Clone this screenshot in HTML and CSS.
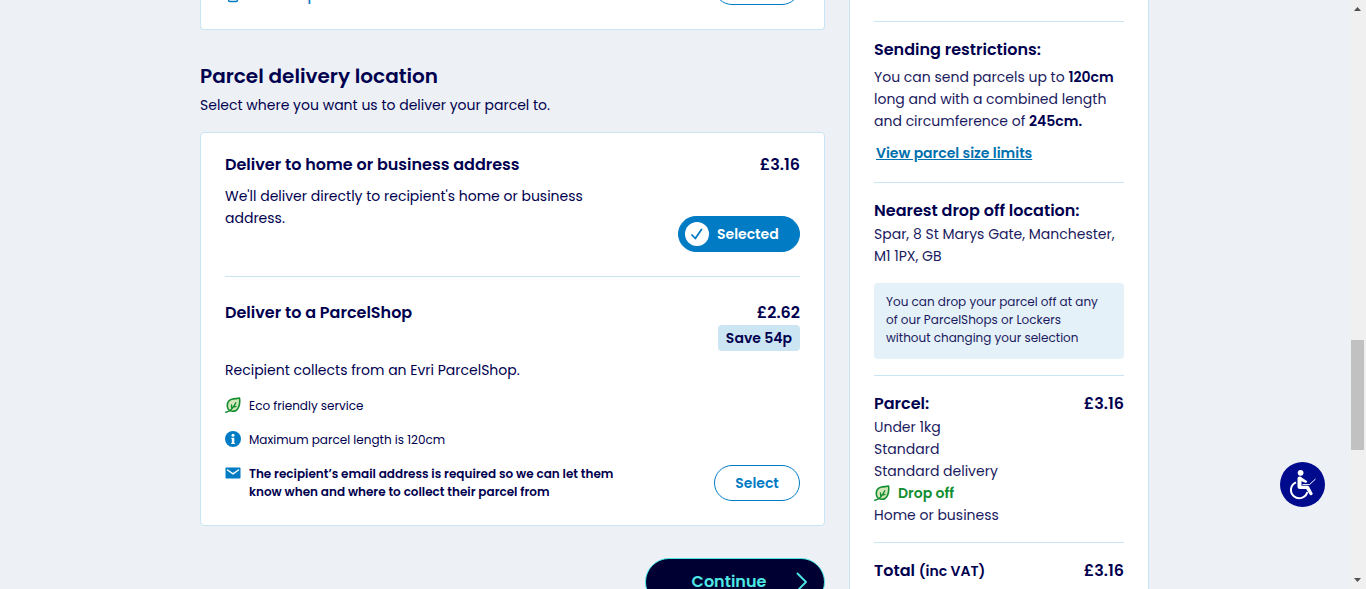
FILE: index.html
```html
<!DOCTYPE html>
<html lang="en">
<head>
<meta charset="utf-8">
<title>Parcel delivery location</title>
<link rel="stylesheet" href="styles.css">
</head>
<body>
<svg class="sprite" aria-hidden="true">
  <symbol id="leaf" viewBox="0 0 16 16">
    <path d="M14.500 1C13 1.600 10 1.500 7.500 2C4 2.800 2.200 5.500 2.300 8.800C2.400 12 4.500 14.200 7.500 14.300C12.800 14.500 15.600 8.500 14.500 1Z" fill="#d3e6b8" stroke="#118e2f" stroke-width="1.600" stroke-linejoin="round"/>
    <path d="M.7 15.300C4.500 15 8.600 10.500 10.800 5.800M6.500 8L6.800 11.200M7.600 10.400L11 9.400" fill="none" stroke="#118e2f" stroke-width="1.400" stroke-linecap="round"/>
  </symbol>
</svg>
<div class="window">
  <div class="viewport">
    <div class="layout">
      <main class="main">
        <section class="card previous">
          <svg class="previous-icon" width="12" height="12" viewBox="0 0 12 12" aria-hidden="true"><rect x="1.500" y="0" width="9" height="8.500" rx="1.500" fill="none" stroke="#007bc4" stroke-width="1.500"/></svg>
          <a class="previous-link" href="#">Find shop</a>
          <button class="btn" type="button" aria-label="Select previous option"></button>
        </section>

        <h1>Parcel delivery location</h1>
        <p class="intro">Select where you want us to deliver your parcel to.</p>

        <section class="card options">
          <article class="option">
            <div class="option-text">
              <h2>Deliver to home or business address</h2>
              <p class="home-text">We'll deliver directly to recipient's home or business<br>address.</p>
            </div>
            <div class="option-side">
              <strong class="price">£3.16</strong>
              <button class="btn selected" type="button" aria-pressed="true">
                <svg width="24" height="24" viewBox="0 0 24 24" aria-hidden="true"><circle cx="12" cy="12" r="12" fill="#fff"/><path d="M7 13L10.300 16.500L16.500 7.500" fill="none" stroke="#007bc4" stroke-width="1.800" stroke-linecap="round" stroke-linejoin="round"/></svg>
                Selected
              </button>
            </div>
          </article>
          <article class="option">
            <div class="option-text">
              <h2>Deliver to a ParcelShop</h2>
              <p class="shop-text">Recipient collects from an Evri ParcelShop.</p>
              <ul class="notes">
                <li><svg class="icon" aria-hidden="true"><use href="#leaf"/></svg><span>Eco friendly service</span></li>
                <li><svg class="icon" viewBox="0 0 16 16" aria-hidden="true"><circle cx="8" cy="8" r="8" fill="#007bc4"/><circle cx="8" cy="4.200" r="1.500" fill="#fff"/><path d="M6.200 6.700H9.300V12H10V13H6.200V12H6.800V7.700H6.200Z" fill="#fff"/></svg><span>Maximum parcel length is 120cm</span></li>
                <li class="strong"><svg class="icon" viewBox="0 0 16 16" aria-hidden="true"><rect x=".5" y="2.500" width="15" height="11" rx=".8" fill="#007bc4"/><path d="M2.500 5L8 8.800L13.500 5" fill="none" stroke="#fff" stroke-width="1.400" stroke-linecap="round" stroke-linejoin="round"/></svg><span>The recipient’s email address is required so we can let them<br>know when and where to collect their parcel from</span></li>
              </ul>
            </div>
            <div class="option-side">
              <div class="price-group"><strong class="price">£2.62</strong><span class="badge">Save 54p</span></div>
              <button class="btn" type="button">Select</button>
            </div>
          </article>
        </section>

        <button class="continue" type="button"><span>Continue</span><svg width="12" height="20" viewBox="0 0 12 20" aria-hidden="true"><path d="M1.500 1.500L10 10L1.500 18.500" fill="none" stroke="#4de8e4" stroke-width="1.800" stroke-linecap="round" stroke-linejoin="round"/></svg></button>
      </main>

      <aside class="summary">
        <section class="block">
          <h2>Sending restrictions:</h2>
          <p class="limits">You can send parcels up to <b>120cm</b><br>long and with a combined length<br>and circumference of <b>245cm.</b></p>
          <a class="limits-link" href="#">View parcel size limits</a>
        </section>
        <section class="block">
          <h2>Nearest drop off location:</h2>
          <p>Spar, 8 St Marys Gate, Manchester,<br>M1 1PX, GB</p>
          <p class="hint">You can drop your parcel off at any<br>of our ParcelShops or Lockers<br>without changing your selection</p>
        </section>
        <section class="block">
          <div class="line"><h2>Parcel:</h2><strong class="price">£3.16</strong></div>
          <ul class="details">
            <li>Under 1kg</li>
            <li>Standard</li>
            <li>Standard delivery</li>
            <li class="eco"><svg class="icon" aria-hidden="true"><use href="#leaf"/></svg>Drop off</li>
            <li>Home or business</li>
          </ul>
        </section>
        <section class="block">
          <div class="line"><h2>Total <small>(inc VAT)</small></h2><strong class="price">£3.16</strong></div>
        </section>
      </aside>
    </div>
    <button class="access" type="button" aria-label="Accessibility options">
      <svg width="45" height="45" viewBox="0 0 45 45" aria-hidden="true">
        <circle cx="22.500" cy="22.500" r="22.500" fill="#000a8c"/>
        <circle cx="20.600" cy="10.800" r="2.900" fill="#fff"/>
        <path d="M17.500 16.500Q17.500 14.500 19.500 14.500Q21 14.500 22 15.700L27.300 19.200Q26.800 21.200 25.200 20.700L21.500 19.300V23.700H27Q28.700 23.700 29.300 25L32.800 31.800Q31.500 34.200 29.800 32.800L26.200 27H20Q17.500 27 17.500 24.500Z" fill="#fff"/>
        <path d="M16 20.300A8.300 8.300 0 1 0 27.300 30" fill="none" stroke="#fff" stroke-width="2"/>
        <path d="M22.500 22.600H29.500L35.500 17" fill="none" stroke="#fff" stroke-width="1"/>
      </svg>
    </button>
  </div>
  <div class="scrollbar" aria-hidden="true">
    <svg width="15" height="17" viewBox="0 0 15 17"><path d="M3 11H10L6.500 7Z" fill="#505050"/></svg>
    <div class="track"><div class="thumb"></div></div>
    <svg width="15" height="17" viewBox="0 0 15 17"><path d="M3 6H10L6.500 10Z" fill="#505050"/></svg>
  </div>
</div>
</body>
</html>
```
FILE: styles.css
```css
* { box-sizing: border-box; }
body {
  margin: 0;
  background: #edf1f5;
  color: #00004f;
  font: 14px/22px Poppins, Inter, sans-serif;
}
h1, h2, p, ul { margin: 0; padding: 0; }
ul { list-style: none; }
button { font: inherit; cursor: pointer; }
a { color: #0070ae; }
b, strong { font-weight: 600; }
.sprite { position: absolute; width: 0; height: 0; }

.window { display: flex; height: 100vh; overflow: hidden; }
.viewport { flex: 1; min-width: 0; padding-right: 2px; }
.layout {
  display: grid;
  grid-template-columns: minmax(0, 1fr) 300px;
  gap: 24px;
  max-width: 949px;
  margin: 0 auto;
}
.main { display: flex; flex-direction: column; }

.card { background: #fff; border: 1px solid #c9e4f2; border-radius: 4px; }
.previous {
  display: flex;
  align-items: flex-end;
  gap: 8px;
  height: 30px;
  padding: 0 24px 24px;
  margin-bottom: 32px;
  border-top: 0;
  border-radius: 0 0 4px 4px;
  overflow: hidden;
}
.previous-icon { margin: 0 2px; }
.previous-link { color: #007bc4; font-weight: 500; line-height: 20px; text-decoration: none; }
.previous .btn { margin-left: auto; }
.previous > * { flex-shrink: 0; }

h1 { font-size: 20px; font-weight: 600; line-height: 28px; }
.intro { margin: 4px 0 16px; }
.options { padding: 20px 24px 24px; }
.option { display: flex; justify-content: space-between; }
.option + .option { margin-top: 24px; padding-top: 24px; border-top: 1px solid #c9e4f2; }
h2, .price { font-size: 16px; font-weight: 600; line-height: 24px; }
.home-text { margin-top: 8px; }
.shop-text { margin: 34px 0 16px; }
.notes { display: grid; gap: 16px; font-size: 12px; line-height: 18px; }
.notes li { display: flex; gap: 8px; }
.notes .strong { font-weight: 600; }
.icon { flex: none; width: 16px; height: 16px; }

.option-side, .price-group { display: flex; flex-direction: column; align-items: flex-end; }
.option-side { justify-content: space-between; gap: 39px; flex: none; }
.badge {
  padding: 2px 8px;
  border-radius: 4px;
  background: #cce5f2;
  font-weight: 600;
}
.btn {
  height: 36px;
  min-width: 86px;
  padding: 0 20px;
  border: 1px solid #007bc4;
  border-radius: 18px;
  background: #fff;
  color: #007bc4;
  font-weight: 600;
}
.selected {
  display: flex;
  align-items: center;
  gap: 8px;
  min-width: 122px;
  padding: 0 20px 0 6px;
  background: #007bc4;
  color: #fff;
}
.continue {
  display: flex;
  align-items: center;
  align-self: flex-end;
  width: 180px;
  height: 48px;
  margin-top: 32px;
  padding: 0 16px;
  border: 1px solid #4de8e4;
  border-radius: 24px;
  background: #000033;
  color: #4de8e4;
  font-size: 16px;
  font-weight: 600;
}
.continue span { flex: 1; }

.summary {
  padding: 21px 24px 24px;
  background: #fff;
  border: solid #c9e4f2;
  border-width: 0 1px;
}
.block { padding: 16px 0; border-top: 1px solid #c9e4f2; }
.block p, .details { color: #1a1a60; }
.block .limits { margin: 4px 0 10px; }
.block b { color: #00004f; }
.limits-link { display: block; margin: 0 0 2px 2px; font-weight: 600; }
.block .hint {
  margin-top: 16px;
  padding: 10px 12px 12px;
  border-radius: 4px;
  background: #e5f1f9;
  font-size: 12px;
  line-height: 18px;
}
.line { display: flex; justify-content: space-between; }
.line small { font-size: 14px; }
.details .eco { display: flex; align-items: center; gap: 8px; color: #118e2f; font-weight: 600; }

.access {
  position: fixed;
  right: 41px;
  bottom: 82px;
  padding: 0;
  border: 0;
  border-radius: 50%;
  background: none;
}
.access svg { display: block; }
.scrollbar { display: flex; flex-direction: column; width: 15px; background: #f0f0f0; }
.track { flex: 1; padding-top: 323px; }
.thumb { width: 13px; height: 110px; background: #c1c1c1; }
```
